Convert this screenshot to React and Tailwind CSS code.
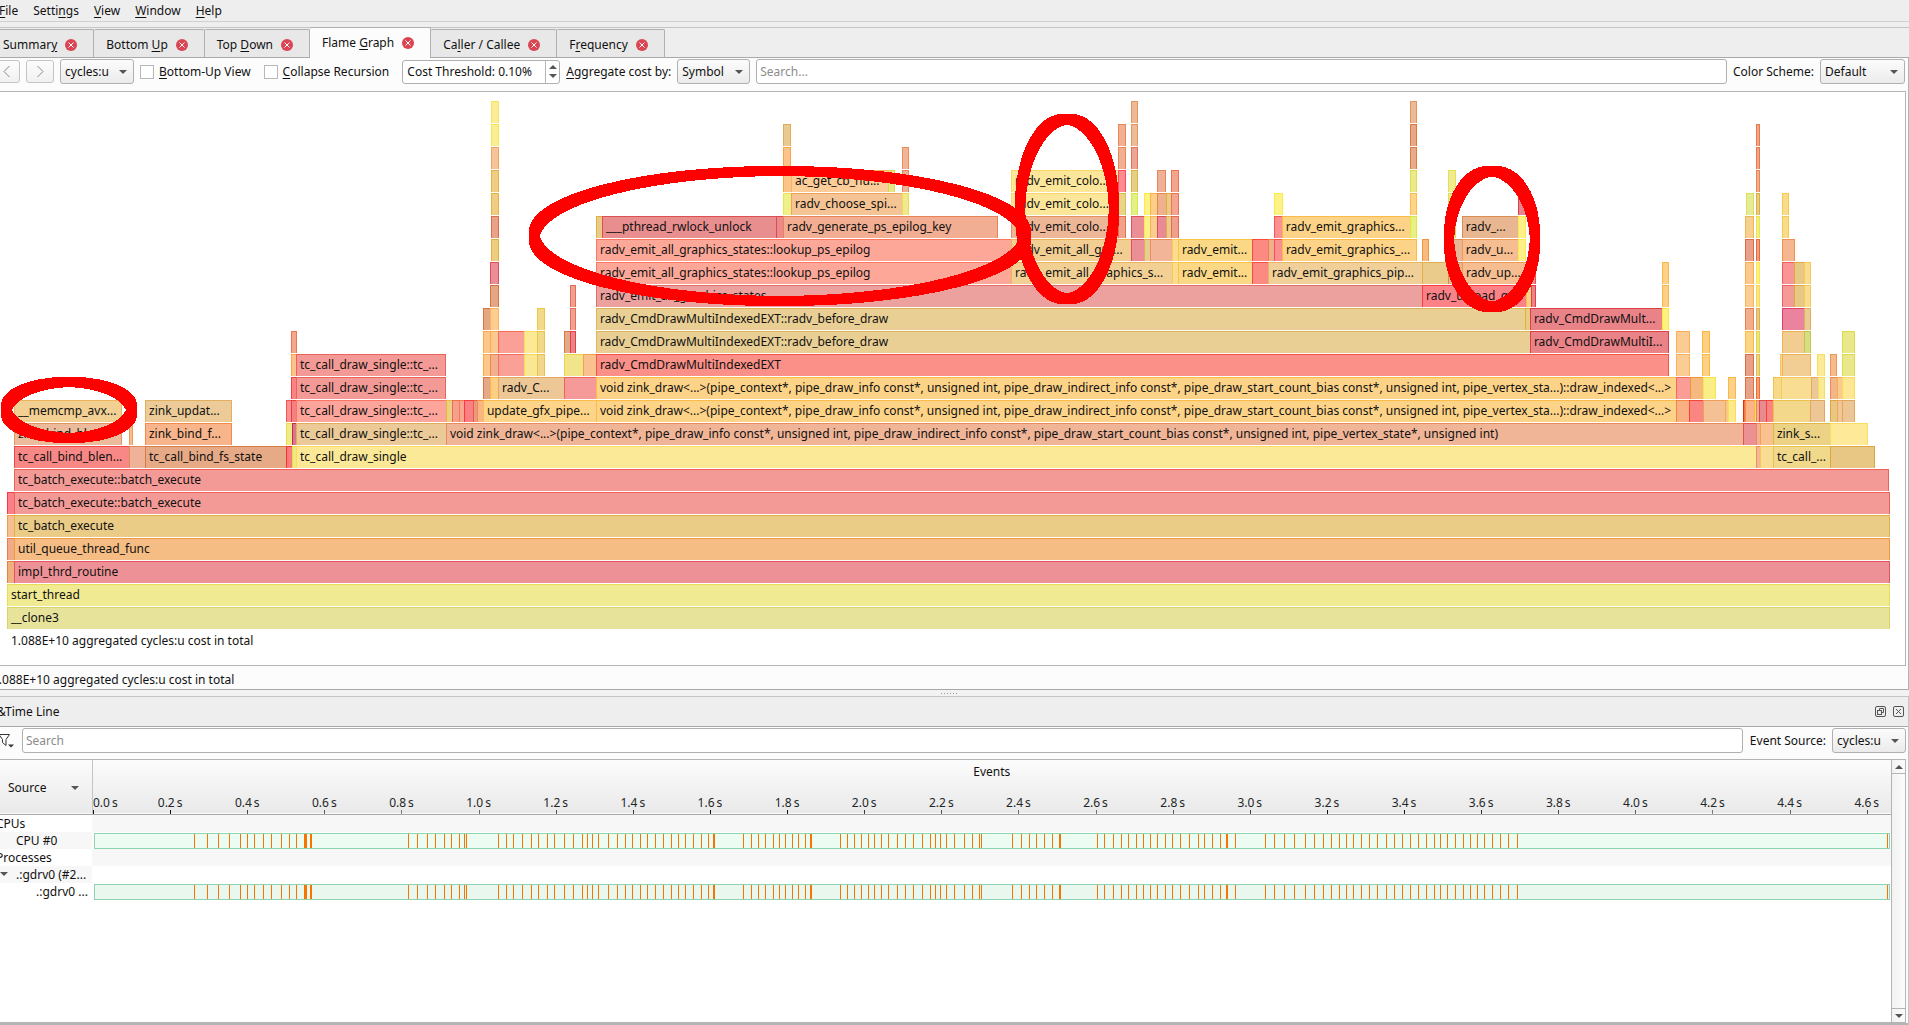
import React from 'react';

const CHART_START = 7;
const CHART_WIDTH = 1883;

const DRAW_INDEXED =
  'void zink_draw<...>(pipe_context*, pipe_draw_info const*, unsigned int, pipe_draw_indirect_info const*, pipe_draw_start_count_bias const*, unsigned int, pipe_vertex_sta...)::draw_indexed<...>';
const DRAW_VERTEX =
  'void zink_draw<...>(pipe_context*, pipe_draw_info const*, unsigned int, pipe_draw_indirect_info const*, pipe_draw_start_count_bias const*, unsigned int, pipe_vertex_state*, unsigned int)';
const TC_DRAW = 'tc_call_draw_single::tc_...';
const LOOKUP = 'radv_emit_all_graphics_states::lookup_ps_epilog';
const BEFORE_DRAW = 'radv_CmdDrawMultiIndexedEXT::radv_before_draw';

// Stack levels from the leaves down to the root: [start, end, colour, label]
const LEVELS = [
  [[491, 499, 'faed95'], [1131, 1138, 'edba98'], [1410, 1417, 'edba98']],
  [[491, 499, 'faef90'], [783, 791, 'eaca93'], [1118, 1126, 'f2b092'], [1131, 1138, 'edbb98'], [1410, 1417, 'e8a885'], [1756, 1760, 'f0a888']],
  [[491, 499, 'f5c498'], [783, 791, 'fcc488'], [902, 909, 'f2b598'], [1118, 1126, 'f2b092'], [1131, 1138, 'eda593'], [1410, 1417, 'e8aa88'], [1756, 1760, 'f0a888']],
  [[491, 499, 'efcd84'], [783, 791, 'fbc489'], [791, 888, 'fccd98', 'ac_get_cb_nu...'], [888, 895, 'e8e68c'], [902, 909, 'f0b095'], [1011, 1118, 'fce69a', 'radv_emit_colo...'], [1118, 1126, 'fd8c93'], [1131, 1138, 'e5cf84'], [1157, 1166, 'f0b095'], [1171, 1179, 'f3a590'], [1410, 1417, 'eaea8c'], [1448, 1456, 'f0eb90'], [1756, 1760, 'f0b090']],
  [[491, 499, 'efcd84'], [783, 791, 'f0f088'], [791, 902, 'f5c495', 'radv_choose_spi...'], [902, 909, 'f0e98e'], [1011, 1118, 'fce69a', 'radv_emit_colo...'], [1118, 1126, 'e8d58a'], [1131, 1138, 'e3f086'], [1144, 1150, 'fdf285'], [1150, 1157, 'fccf89'], [1157, 1166, 'efb08d'], [1166, 1171, 'ebca85'], [1171, 1179, 'f3a590'], [1274, 1283, 'fdf285'], [1410, 1417, 'fdd488'], [1448, 1456, 'f0e88a'], [1518, 1526, 'e8848b'], [1746, 1754, 'e8eb95'], [1756, 1760, 'e8cc85'], [1782, 1789, 'f9dc8b']],
  [[491, 499, 'e8a288'], [596, 602, 'ebcb88'], [602, 776, 'e98e8f', '___pthread_rwlock_unlock'], [776, 783, 'eb8a8d'], [783, 998, 'f2ae92', 'radv_generate_ps_epilog_key'], [1011, 1118, 'edb797', 'radv_emit_colo...'], [1118, 1126, 'f0a28b'], [1131, 1144, 'eb8e96'], [1144, 1150, 'fbf08a'], [1150, 1157, 'f9cd90'], [1157, 1166, 'e98a94'], [1166, 1171, 'eacb8c'], [1171, 1179, 'f09f8c'], [1274, 1282, 'fb9191'], [1282, 1410, 'fdd388', 'radv_emit_graphics...'], [1410, 1417, 'e8f083'], [1448, 1456, 'f0e88a'], [1462, 1518, 'e8b690', 'radv_...'], [1518, 1526, 'fdf08a'], [1745, 1754, 'f5d08f'], [1756, 1760, 'f0ee8a'], [1782, 1789, 'f9dc8b']],
  [[491, 499, 'edcd80'], [596, 1011, 'fda799', LOOKUP], [1011, 1131, 'f2ce92', 'radv_emit_all_gra...'], [1131, 1144, 'eb8e96'], [1144, 1150, 'e9cc92'], [1150, 1172, 'f2b598'], [1172, 1178, 'fcdd90'], [1178, 1252, 'fbd886', 'radv_emit...'], [1252, 1268, 'fc8a83'], [1268, 1274, 'efae8c'], [1274, 1282, 'fb8e8f'], [1282, 1417, 'fdd388', 'radv_emit_graphics_...'], [1422, 1429, 'f7bb80'], [1453, 1462, 'e8b795'], [1462, 1518, 'f5bd90', 'radv_u...'], [1518, 1526, 'fdf08a'], [1745, 1754, 'e8a08a'], [1756, 1760, 'f0a080'], [1782, 1795, 'f5b78f']],
  [[490, 499, 'eb8d97'], [596, 1011, 'fda799', LOOKUP], [1011, 1172, 'f2d094', 'radv_emit_all_graphics_s...'], [1172, 1178, 'fcdd90'], [1178, 1252, 'fbd886', 'radv_emit...'], [1252, 1268, 'fc8a83'], [1268, 1422, 'f0cf98', 'radv_emit_graphics_pip...'], [1422, 1448, 'ebcb8b'], [1448, 1462, 'e8b58f'], [1462, 1526, 'f5bd90', 'radv_up...'], [1526, 1536, 'fa8a8a'], [1662, 1669, 'fdd188'], [1745, 1754, 'fbc98d'], [1756, 1760, 'fdf08a'], [1782, 1794, 'f99595'], [1794, 1804, 'e8c885'], [1804, 1811, 'f9dc92']],
  [[490, 499, 'e5a685'], [570, 576, 'f0a090'], [596, 1422, 'eda19e', 'radv_emit_all_graphics_states'], [1422, 1526, 'fb8287', 'radv_upload_gr...'], [1526, 1531, 'fcd286'], [1531, 1536, 'eb8389'], [1662, 1669, 'fdcf88'], [1745, 1754, 'fbcd92'], [1756, 1760, 'fbe58d'], [1782, 1794, 'f49a98'], [1794, 1804, 'e8c885'], [1804, 1811, 'f9dc92']],
  [[483, 490, 'e5a683'], [490, 499, 'fecd92'], [537, 545, 'f3da89'], [570, 576, 'efa292'], [596, 1525, 'e9cf94', BEFORE_DRAW], [1525, 1530, 'ebcd82'], [1530, 1662, 'e98388', 'radv_CmdDrawMult...'], [1662, 1669, 'fdf182'], [1745, 1754, 'f2ad8c'], [1756, 1760, 'ebc98a'], [1782, 1804, 'eb839e'], [1804, 1811, 'ebca94']],
  [[291, 297, 'f2a78f'], [483, 490, 'fcc789'], [490, 498, 'fcc98f'], [498, 524, 'faa096'], [524, 537, 'fce996'], [537, 545, 'f1d98b'], [564, 570, 'e7a887'], [570, 576, 'e98589'], [596, 1530, 'e9cf94', BEFORE_DRAW], [1530, 1669, 'e98388', 'radv_CmdDrawMultiI...'], [1676, 1690, 'fbcb94'], [1702, 1710, 'fdcf83'], [1745, 1754, 'fdd385'], [1756, 1760, 'ebe588'], [1782, 1804, 'f2cd92'], [1804, 1811, 'd8dc87'], [1842, 1855, 'e9e88b']],
  [[291, 296, 'fec38c'], [296, 446, 'f49a96', TC_DRAW], [483, 490, 'fcc789'], [490, 498, 'f2b18c'], [498, 524, 'faa096'], [524, 537, 'f9e793'], [537, 545, 'f1d78b'], [564, 583, 'f1e48a'], [583, 596, 'f9c18e'], [596, 1669, 'fa9087', 'radv_CmdDrawMultiIndexedEXT'], [1676, 1690, 'fbcd94'], [1702, 1710, 'fdd185'], [1745, 1754, 'e8a088'], [1756, 1760, 'ebd588'], [1780, 1782, 'fdd995'], [1782, 1811, 'f2cd94'], [1817, 1825, 'fcea95'], [1830, 1837, 'f5bb8f'], [1842, 1855, 'e9e88b']],
  [[291, 296, 'fa8385'], [296, 446, 'f49a96', TC_DRAW], [483, 490, 'e6a887'], [490, 498, 'fdcf85'], [498, 564, 'edc795', 'radv_C...'], [564, 596, 'f59a98'], [596, 1676, 'fdd388', DRAW_INDEXED], [1676, 1690, 'fb9d97'], [1690, 1703, 'f5b97f'], [1703, 1716, 'f9ef86'], [1728, 1736, 'fdd188'], [1745, 1754, 'e8a287'], [1756, 1760, 'f9a078'], [1773, 1781, 'f6d989'], [1781, 1811, 'f9dd92'], [1811, 1818, 'edc897'], [1818, 1825, 'f9ea94'], [1830, 1837, 'f5b58b'], [1837, 1842, 'f9cb8f'], [1842, 1855, 'fde794']],
  [[14, 122, 'f2cf93', '__memcmp_avx...'], [145, 232, 'eccb98', 'zink_updat...'], [286, 291, 'f9938f'], [291, 296, 'f38183'], [296, 446, 'fda59b', TC_DRAW], [446, 452, 'ecd184'], [452, 459, 'f5a08d'], [459, 464, 'f9a790'], [464, 473, 'fb8083'], [473, 477, 'e99a82'], [477, 483, 'f9b487'], [483, 596, 'fdd488', 'update_gfx_pipe...'], [596, 1676, 'fdd388', DRAW_INDEXED], [1676, 1689, 'f9b083'], [1689, 1703, 'fb8581'], [1703, 1725, 'f3c193'], [1725, 1728, 'f9c88b'], [1728, 1736, 'fdea90'], [1743, 1745, 'ee7a50'], [1745, 1754, 'f9b587'], [1754, 1756, 'ffd27e'], [1756, 1759, 'f2b08f'], [1759, 1766, 'e88b8e'], [1766, 1773, 'fb8481'], [1773, 1810, 'f3d88b'], [1810, 1825, 'ecc695'], [1830, 1837, 'e9c783'], [1837, 1842, 'f3c795'], [1842, 1855, 'edc695']],
  [[14, 122, 'ecbb9b', 'zink_bind_ble...'], [129, 133, 'f6bd90'], [145, 232, 'f8b48a', 'zink_bind_f...'], [286, 292, 'f0ea88'], [292, 296, 'd9788a'], [296, 446, 'ebca97', TC_DRAW], [446, 1743, 'f0b597', DRAW_VERTEX], [1743, 1756, 'ec9093'], [1756, 1760, 'f3b294'], [1760, 1773, 'f9c190'], [1773, 1830, 'ebd285', 'zink_s...'], [1830, 1868, 'fde998']],
  [[14, 129, 'f88886', 'tc_call_bind_blen...'], [129, 145, 'edb297'], [145, 286, 'e6aa87', 'tc_call_bind_fs_state'], [286, 292, 'f97b7b'], [292, 296, 'eee985'], [296, 1756, 'fce998', 'tc_call_draw_single'], [1756, 1760, 'f3b796'], [1760, 1773, 'f9dc94'], [1773, 1830, 'f1d98b', 'tc_call_...'], [1830, 1875, 'e8c684']],
  [[14, 1889, 'f49a96', 'tc_batch_execute::batch_execute']],
  [[7, 14, 'fa7f88'], [14, 1890, 'f49a96', 'tc_batch_execute::batch_execute']],
  [[7, 14, 'f5bf92'], [14, 1890, 'ebcc87', 'tc_batch_execute']],
  [[7, 14, 'f2ab89'], [14, 1890, 'f5bd84', 'util_queue_thread_func']],
  [[7, 14, 'eeb07f'], [14, 1890, 'ed9196', 'impl_thrd_routine']],
  [[7, 1890, 'f0ea92', 'start_thread']],
  [[7, 1890, 'e7e39b', '__clone3']],
];

const MARKS = [
  { cx: 69, cy: 309, rx: 63, ry: 28 },
  { cx: 780, cy: 135, rx: 246, ry: 65 },
  { cx: 1067, cy: 108, rx: 47, ry: 90 },
  { cx: 1492, cy: 138, rx: 43, ry: 68 },
];

const TIMELINE_START = 93;
const TIMELINE_WIDTH = 1799;

// Sample positions; wide entries are several samples side by side.
const SAMPLES = [
  194, 207, 218, 229, 240, 247, 254, 263, 271, 281, 289, 296, 304, 305, 306, 310, 311, 408, 417, 427, 435, 444, 451, 459, 464, 466,
  498, 506, 513, 522, 531, 538, 547, 554, 564, 573, 582, 587, 592, 598, 608, 617, 625, 632, 640, 647, 655, 663, 671, 678, 685, 693,
  701, 708, 713, 714, 743, 751, 758, 765, 773, 779, 785, 792, 798, 805, 810, 811, 840, 847, 854, 861, 868, 874, 881, 888, 897, 905,
  913, 922, 930, 935, 940, 946, 954, 964, 972, 979, 981, 1013, 1022, 1030, 1037, 1045, 1053, 1060, 1061, 1098, 1105, 1114, 1122,
  1129, 1137, 1144, 1151, 1158, 1166, 1173, 1181, 1190, 1199, 1205, 1213, 1221, 1227, 1228, 1236, 1266, 1275, 1285, 1295, 1306,
  1315, 1324, 1332, 1340, 1347, 1354, 1362, 1370, 1378, 1387, 1395, 1403, 1411, 1419, 1427, 1435, 1441, 1448, 1456, 1464, 1471,
  1478, 1485, 1493, 1501, 1509, 1518, 1888,
];

const AXIS = Array.from({ length: 24 }, (_, i) => (i * 0.2).toFixed(1));

function darker(hex) {
  const parts = [0, 2, 4].map((i) => Math.max(0, Math.round(255 - (255 - parseInt(hex.slice(i, i + 2), 16)) * 1.55)));
  return `rgb(${parts.join(',')})`;
}

function share(px) {
  return `${(px / CHART_WIDTH) * 100}%`;
}

// An ellipse traced with a square brush: thicker on the diagonals, pointed on the inside.
function brushedEllipse(rx, ry) {
  const h = 5;
  const x = rx * Math.sqrt(1 - (h / ry) ** 2) - h;
  const y = ry * Math.sqrt(1 - (h / rx) ** 2) - h;
  const arc = `A${rx} ${ry} 0 0 1`;
  return [
    `M${-h} ${-ry - h} H${h} ${arc} ${rx + h} ${-h} V${h} ${arc} ${h} ${ry + h} H${-h} ${arc} ${-rx - h} ${h} V${-h} ${arc} ${-h} ${-ry - h} Z`,
    `M0 ${-y} ${arc} ${x} 0 ${arc} 0 ${y} ${arc} ${-x} 0 ${arc} 0 ${-y} Z`,
  ].join(' ');
}

function Level({ frames }) {
  return (
    <div className="flex h-[22px]">
      {frames.map(([start, end, colour, label], i) => {
        const previousEnd = i ? frames[i - 1][1] : CHART_START;
        const touchesNext = i + 1 < frames.length && frames[i + 1][0] === end;
        return (
          <div
            key={start}
            className={`shrink-0 overflow-hidden border-t border-l whitespace-nowrap leading-5 ${touchesNext ? '' : 'border-r'} ${label ? 'pl-[3px]' : ''}`}
            style={{
              marginLeft: share(start - previousEnd),
              width: share(end - start),
              backgroundColor: `#${colour}`,
              borderColor: darker(colour),
            }}
          >
            {label}
          </div>
        );
      })}
    </div>
  );
}

function FlameGraph() {
  return (
    <section aria-label="Flame graph" className="mr-[2px] border-y border-r border-[#b4b4b4] bg-white pt-[9px] pr-[15px] pb-3 pl-[7px]">
      <div className="relative">
        <div className="flex flex-col gap-px">
          {LEVELS.map((frames, i) => (
            <Level key={i} frames={frames} />
          ))}
        </div>
        <svg className="pointer-events-none absolute inset-0 h-full w-full overflow-visible" aria-hidden="true">
          {MARKS.map((m) => (
            <svg key={m.cx} x={share(m.cx - CHART_START)} y={m.cy} width="1" height="1" className="overflow-visible">
              <path d={brushedEllipse(m.rx, m.ry)} fill="#ff0000" fillRule="evenodd" shapeRendering="crispEdges" />
            </svg>
          ))}
        </svg>
      </div>
      <p className="pl-1 leading-6">1.088E+10 aggregated cycles:u cost in total</p>
    </section>
  );
}

function Mnemonic({ text, at }) {
  return (
    <span className="whitespace-nowrap">
      {text.slice(0, at)}
      <span className="underline underline-offset-2">{text[at]}</span>
      {text.slice(at + 1)}
    </span>
  );
}

function CloseBadge() {
  return (
    <svg width="12" height="12" viewBox="0 0 12 12" aria-hidden="true">
      <circle cx="6" cy="6" r="6" fill="#da4453" />
      <path d="M3.500 3.500 L8.500 8.500 M8.500 3.500 L3.500 8.500" stroke="#fff" strokeWidth="1" fill="none" />
    </svg>
  );
}

function Tab({ text, at, active }) {
  return (
    <div
      className={`flex items-center gap-2 rounded-t-[2px] border-t border-r border-[#b0b0b0] pr-4 pl-3 ${
        active ? '-mb-px h-[31px] bg-[#fcfcfc] pb-px' : 'h-7 bg-[#e8e8e8] pt-[2px]'
      }`}
    >
      <button type="button" role="tab" aria-selected={!!active}>
        <Mnemonic text={text} at={at} />
      </button>
      <button type="button" aria-label={`Close ${text}`}>
        <CloseBadge />
      </button>
    </div>
  );
}

function Arrow({ up }) {
  return (
    <svg width="8" height="4" viewBox="0 0 8 4" aria-hidden="true">
      <path d={up ? 'M0 4 L4 0 L8 4 Z' : 'M0 0 L4 4 L8 0 Z'} fill="#555" />
    </svg>
  );
}

function Select({ id, label, value, className }) {
  return (
    <div className={`relative h-[25px] shrink-0 ${className}`}>
      <select
        id={id}
        aria-label={label}
        className="h-full w-full appearance-none rounded-[3px] border border-[#b0b0b0] bg-linear-to-b from-[#fcfcfc] to-[#ebebeb] pl-1"
      >
        <option>{value}</option>
      </select>
      <span className="pointer-events-none absolute inset-y-0 right-[7px] flex items-center">
        <Arrow />
      </span>
    </div>
  );
}

function Check({ id, text }) {
  return (
    <div className="flex items-center gap-[5px]">
      <input id={id} type="checkbox" className="h-[14px] w-[14px] appearance-none border border-[#b8b8b8] bg-white" />
      <label htmlFor={id}>
        <Mnemonic text={text} at={0} />
      </label>
    </div>
  );
}

function Toolbar() {
  const nav = 'flex h-[23px] shrink-0 items-center justify-center rounded-[3px] border border-[#c4c4c4] bg-linear-to-b from-[#fcfcfc] to-[#f1f1f1]';
  return (
    <div className="flex items-center bg-[#fcfcfc] pt-px pr-[3px] pb-[7px]">
      <button type="button" aria-label="Back" className={`${nav} -ml-[8px] w-[28px]`}>
        <svg width="9" height="13" viewBox="0 0 9 13" fill="none" stroke="#8a8a8a">
          <path d="M7.500 1 L2 6.500 L7.500 12" />
        </svg>
      </button>
      <button type="button" aria-label="Forward" className={`${nav} ml-[6px] w-[28px]`}>
        <svg width="9" height="13" viewBox="0 0 9 13" fill="none" stroke="#8a8a8a">
          <path d="M1.500 1 L7 6.500 L1.500 12" />
        </svg>
      </button>
      <Select label="Event type" value="cycles:u" className="ml-[6px] w-[74px]" />
      <div className="ml-[6px] flex gap-[13px]">
        <Check id="bottom-up" text="Bottom-Up View" />
        <Check id="collapse" text="Collapse Recursion" />
      </div>
      <div className="ml-[13px] flex h-[24px] w-[158px] shrink-0 rounded-[3px] border border-[#b0b0b0] bg-white">
        <input aria-label="Cost threshold" defaultValue="Cost Threshold: 0.10%" className="w-full min-w-0 pl-1 outline-none" />
        <div className="flex w-[14px] shrink-0 flex-col items-center justify-center gap-[5px] border-l border-[#b8b8b8]">
          <button type="button" aria-label="Increase">
            <Arrow up />
          </button>
          <button type="button" aria-label="Decrease">
            <Arrow />
          </button>
        </div>
      </div>
      <label htmlFor="aggregate" className="ml-[6px]">
        <Mnemonic text="Aggregate cost by:" at={0} />
      </label>
      <Select id="aggregate" value="Symbol" className="ml-[6px] w-[73px]" />
      <input aria-label="Search" placeholder="Search..." className="ml-[6px] h-[25px] min-w-0 flex-1 rounded-[3px] border border-[#b0b0b0] bg-white pl-[3px] placeholder:text-[#8c8c8c]" />
      <label htmlFor="scheme" className="ml-[6px] whitespace-nowrap">
        Color Scheme:
      </label>
      <Select id="scheme" value="Default" className="ml-[6px] w-[85px]" />
    </div>
  );
}

function SampleTrack({ tint }) {
  return (
    <div className={`mr-px ml-[2px] h-4 border border-[#8fd4b0] ${tint}`}>
      <svg className="block h-full w-full overflow-visible" shapeRendering="crispEdges" aria-hidden="true">
        {SAMPLES.map((x) => (
          <rect key={x} x={`${((x - TIMELINE_START - 2) / (TIMELINE_WIDTH - 4)) * 100}%`} y="0" width="1" height="14" fill="#f67400" />
        ))}
      </svg>
    </div>
  );
}

function Axis() {
  return (
    <svg className="block h-[31px] w-full overflow-hidden" aria-hidden="true" fontSize="12">
      {AXIS.map((t, i) => {
        const x = `${((i * 77.14) / TIMELINE_WIDTH) * 100}%`;
        return (
          <g key={t}>
            <text x={x} y="24" textAnchor={i ? 'middle' : 'start'} fill="#232627">
              {`${t}\u2009s`}
            </text>
            <svg x={x} y="27" width="1" height="4">
              <rect width="1" height="4" fill="#111" shapeRendering="crispEdges" />
            </svg>
          </g>
        );
      })}
    </svg>
  );
}

const SOURCES = [
  { name: 'CPUs', inset: '-ml-1', cell: '', lane: 'bg-[#f7f7f7]' },
  { name: 'CPU #0', inset: 'ml-4', cell: 'bg-[#f7f7f7]', lane: '', tint: 'bg-[#ecfcf3]' },
  { name: 'Processes', inset: '-ml-1', cell: '', lane: 'bg-[#f7f7f7]' },
  { name: '.:gdrv0 (#2...', inset: 'ml-4', cell: 'bg-[#f7f7f7]', lane: '', open: true },
  { name: '.:gdrv0 ...', inset: 'ml-9', cell: '', lane: '', tint: 'bg-[#e9f7ef]' },
];

function TimeLine() {
  return (
    <section aria-label="Time line" className="flex flex-1 flex-col border-t border-r border-[#c4c4c4] bg-[#fcfcfc]">
      <div className="flex h-[30px] items-center justify-between border-b border-[#a8a8a8] bg-[#eee] pr-1">
        <h2 className="-ml-[3px]">&amp;Time Line</h2>
        <div className="flex gap-[7px]">
          <button type="button" aria-label="Float">
            <svg width="11" height="11" viewBox="0 0 11 11" fill="none" stroke="#555">
              <rect x="0.500" y="0.500" width="10" height="10" rx="1.500" />
              <rect x="2.500" y="4.500" width="4" height="4" />
              <path d="M4.500 4.500 V2.500 H8.500 V6.500 H6.500" />
            </svg>
          </button>
          <button type="button" aria-label="Close">
            <svg width="11" height="11" viewBox="0 0 11 11" fill="none" stroke="#555">
              <rect x="0.500" y="0.500" width="10" height="10" rx="1.500" />
              <path d="M3 3 L8 8 M8 3 L3 8" />
            </svg>
          </button>
        </div>
      </div>
      <div className="flex items-center pt-px pr-[2px] pb-[6px]">
        <button type="button" aria-label="Filter" className="w-[22px] shrink-0">
          <svg width="15" height="15" viewBox="0 0 15 15" fill="none" stroke="#333">
            <path d="M-3 1.500 H9.500 L6 6.500 V12.500 L2.500 9.500 V6.500 L-1 1.500" />
            <path d="M8 11.500 h6 l-3 3 z" fill="#333" stroke="none" />
          </svg>
        </button>
        <input aria-label="Search sources" placeholder="Search" className="h-[25px] min-w-0 flex-1 rounded-[3px] border border-[#b0b0b0] bg-white pl-[3px] placeholder:text-[#8c8c8c]" />
        <label htmlFor="event-source" className="ml-[7px] whitespace-nowrap">
          Event Source:
        </label>
        <Select id="event-source" value="cycles:u" className="ml-[6px] w-[74px]" />
      </div>
      <div className="mr-[2px] flex flex-1 border-y border-r border-t-[#b4b4b4] border-r-[#b4b4b4] border-b-[#b4b4b4] bg-white">
        <div className="min-w-0 flex-1">
          <table className="w-full table-fixed border-collapse">
            <thead>
              <tr className="h-[54px] border-b border-[#a8a8a8] bg-linear-to-b from-[#fcfcfc] to-[#e9e9e9]">
                <th scope="col" className="w-[92px] border-r border-[#c4c4c4] p-0 pt-[2px] font-normal">
                  <button type="button" className="flex w-full items-center justify-between pr-[13px] pl-2">
                    Source
                    <Arrow />
                  </button>
                </th>
                <th scope="col" className="p-0 align-bottom font-normal">
                  <div className="leading-[22px]">Events</div>
                  <Axis />
                </th>
              </tr>
            </thead>
            <tbody>
              {SOURCES.map((s) => (
                <tr key={s.name} className="h-[17px]">
                  <td className={`overflow-hidden p-0 leading-[17px] whitespace-nowrap ${s.cell}`}>
                    <div className="relative">
                      {s.open && (
                        <button type="button" aria-label="Collapse" className="absolute inset-y-0 left-0 flex items-center">
                          <Arrow />
                        </button>
                      )}
                      <div className={s.inset}>{s.name}</div>
                    </div>
                  </td>
                  <td className={`p-0 align-bottom ${s.lane}`}>{s.tint && <SampleTrack tint={s.tint} />}</td>
                </tr>
              ))}
            </tbody>
          </table>
        </div>
        <div className="flex w-[14px] shrink-0 flex-col border-l border-[#b4b4b4] bg-linear-to-r from-[#f2f2f2] to-[#fcfcfc]">
          <button type="button" aria-label="Scroll up" className="flex h-[14px] items-center justify-center border-b border-[#b4b4b4]">
            <Arrow up />
          </button>
          <div className="flex-1" />
          <button type="button" aria-label="Scroll down" className="flex h-[14px] items-center justify-center border-t border-[#b4b4b4]">
            <Arrow />
          </button>
        </div>
      </div>
      <div className="h-[2px] bg-[#b4b4b4]" />
    </section>
  );
}

export default function App() {
  return (
    <main className="flex min-h-screen flex-col overflow-hidden bg-[#eee] font-['Noto_Sans',sans-serif] text-[12px] leading-[18px] text-[#111]">
      <nav className="flex h-[22px] items-center gap-[15px] border-b border-[#d0d0d0]">
        <button type="button" className="-ml-px"><Mnemonic text="File" at={0} /></button>
        <button type="button"><Mnemonic text="Settings" at={5} /></button>
        <button type="button"><Mnemonic text="View" at={0} /></button>
        <button type="button"><Mnemonic text="Window" at={0} /></button>
        <button type="button"><Mnemonic text="Help" at={0} /></button>
      </nav>
      <div role="tablist" className="mt-[5px] flex h-[31px] items-end border-t border-b border-t-[#c4c4c4] border-b-[#a8a8a8]">
        <div className="-ml-[9px]">
          <Tab text="Summary" at={6} />
        </div>
        <Tab text="Bottom Up" at={7} />
        <Tab text="Top Down" at={4} />
        <Tab text="Flame Graph" at={6} active />
        <Tab text="Caller / Callee" at={2} />
        <Tab text="Frequency" at={1} />
      </div>
      <div className="border-r border-[#b4b4b4] bg-[#fcfcfc]">
        <Toolbar />
        <FlameGraph />
        <p className="-ml-2 h-6 border-b border-[#a8a8a8] pt-1 leading-5">1.088E+10 aggregated cycles:u cost in total</p>
      </div>
      <div className="flex h-[6px] items-center justify-center gap-[2px] bg-[#f2f2f2] pr-3">
        {[0, 1, 2, 3, 4, 5].map((i) => (
          <span key={i} className="h-px w-px bg-[#999]" />
        ))}
      </div>
      <TimeLine />
    </main>
  );
}
